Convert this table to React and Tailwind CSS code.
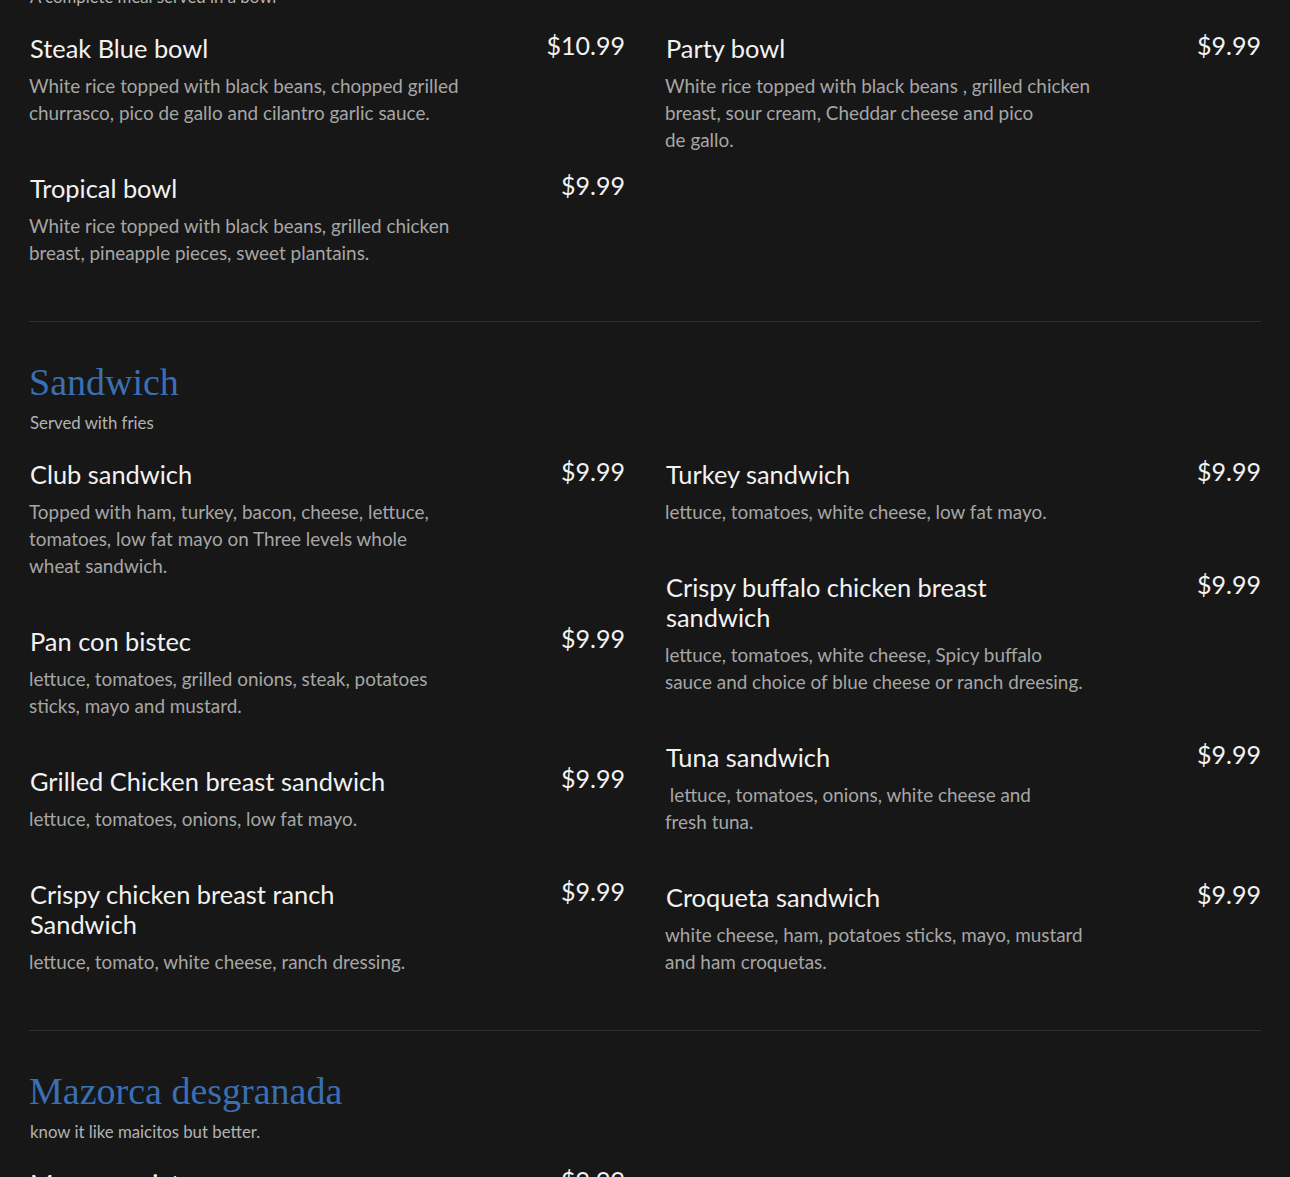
import React from 'react';

const sections = [
  {
    title: 'Bowls',
    subtitle: 'A complete meal served in a bowl',
    columns: [
      [
        {
          name: ['Steak Blue bowl'],
          price: '$10.99',
          desc: ['White rice topped with black beans, chopped grilled', 'churrasco, pico de gallo and cilantro garlic sauce.'],
        },
        {
          name: ['Tropical bowl'],
          price: '$9.99',
          desc: ['White rice topped with black beans, grilled chicken', 'breast, pineapple pieces, sweet plantains.'],
        },
      ],
      [
        {
          name: ['Party bowl'],
          price: '$9.99',
          desc: ['White rice topped with black beans , grilled chicken', 'breast, sour cream, Cheddar cheese and pico', 'de gallo.'],
        },
      ],
    ],
  },
  {
    title: 'Sandwich',
    subtitle: 'Served with fries',
    columns: [
      [
        {
          name: ['Club sandwich'],
          price: '$9.99',
          desc: ['Topped with ham, turkey, bacon, cheese, lettuce,', 'tomatoes, low fat mayo on Three levels whole', 'wheat sandwich.'],
        },
        {
          name: ['Pan con bistec'],
          price: '$9.99',
          desc: ['lettuce, tomatoes, grilled onions, steak, potatoes', 'sticks, mayo and mustard.'],
        },
        {
          name: ['Grilled Chicken breast sandwich'],
          price: '$9.99',
          desc: ['lettuce, tomatoes, onions, low fat mayo.'],
        },
        {
          name: ['Crispy chicken breast ranch', 'Sandwich'],
          price: '$9.99',
          desc: ['lettuce, tomato, white cheese, ranch dressing.'],
        },
      ],
      [
        {
          name: ['Turkey sandwich'],
          price: '$9.99',
          desc: ['lettuce, tomatoes, white cheese, low fat mayo.'],
        },
        {
          name: ['Crispy buffalo chicken breast', 'sandwich'],
          price: '$9.99',
          desc: ['lettuce, tomatoes, white cheese, Spicy buffalo', 'sauce and choice of blue cheese or ranch dreesing.'],
        },
        {
          name: ['Tuna sandwich'],
          price: '$9.99',
          desc: ['\u00a0lettuce, tomatoes, onions, white cheese and', 'fresh tuna.'],
        },
        {
          name: ['Croqueta sandwich'],
          price: '$9.99',
          desc: ['white cheese, ham, potatoes sticks, mayo, mustard', 'and ham croquetas.'],
        },
      ],
    ],
  },
  {
    title: 'Mazorca desgranada',
    subtitle: 'know it like maicitos but better.',
    columns: [
      [
        {
          name: ['Mazorca mixta'],
          price: '$9.99',
          desc: ['White corn, chicken, beef, cheese and sauces.'],
        },
      ],
      [],
    ],
  },
];

function MenuItem({ item }) {
  return (
    <div className="mb-[47px] flex items-start justify-between">
      <div>
        <h3 className="pl-px text-[25.4px] leading-[30px] text-[#f2f2f2] whitespace-nowrap">
          {item.name.map((l, i) => (
            <div key={i}>{l}</div>
          ))}
        </h3>
        <p className="mt-[9px] text-[18.9px] leading-[27px] text-[#a6a6a6] whitespace-nowrap">
          {item.desc.map((l, i) => (
            <span key={i} className="block">{l}</span>
          ))}
        </p>
      </div>
      <span className="-mt-[3px] text-[25px] leading-[30px] text-[#f2f2f2]">{item.price}</span>
    </div>
  );
}

function Section({ section, first }) {
  return (
    <section className={first ? 'pb-[8px]' : 'border-t border-[#303030] pt-[36px] pb-[8px]'}>
      <h2 className="text-[38px] leading-[48px] text-[#3a6fb3]" style={{ fontFamily: '"Liberation Serif", "DejaVu Serif", serif' }}>
        {section.title}
      </h2>
      <p className="mt-[5px] pl-px text-[16.8px] leading-[24px] text-[#b3b3b3]">{section.subtitle}</p>
      <div className="mt-[24px] grid grid-cols-2 gap-x-10">
        {section.columns.map((col, ci) => (
          <div key={ci}>
            {col.map((item, ii) => (
              <MenuItem key={ii} item={item} />
            ))}
          </div>
        ))}
      </div>
    </section>
  );
}

export default function App() {
  return (
    <div className="h-[1177px] overflow-hidden bg-[#171717]" style={{ fontFamily: 'Lato, "Open Sans", sans-serif' }}>
      <div className="-mt-[68px] px-[29px]">
        {sections.map((s, i) => (
          <Section key={i} section={s} first={i === 0} />
        ))}
      </div>
    </div>
  );
}
